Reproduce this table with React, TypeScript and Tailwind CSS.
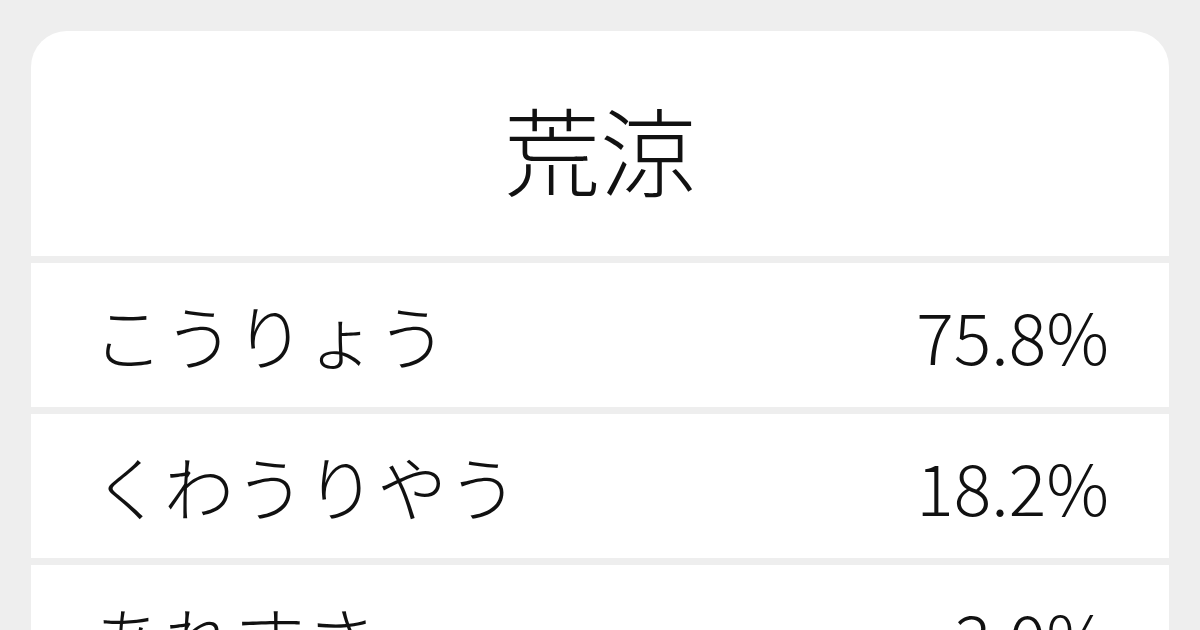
import React from 'react';

const rows = [
  { kana: 'こうりょう', pct: '75.8%' },
  { kana: 'くわうりやう', pct: '18.2%' },
  { kana: 'あれすさ', pct: '3.0%' },
];

export default function App() {
  return (
    <div
      className="w-[1200px] h-[630px] overflow-hidden bg-[#eeeeee] px-[31px] pt-[31px] text-[#111111]"
      style={{ fontFamily: '"Noto Sans CJK JP", "Noto Sans", sans-serif' }}
    >
      <div className="flex flex-col gap-[7px] rounded-t-[36px] overflow-hidden">
        <div className="h-[225px] bg-white flex items-center justify-center pt-[8px]">
          <h1 className="text-[96px] font-light leading-none">荒涼</h1>
        </div>
        {rows.map((r) => (
          <div key={r.kana} className="h-[144px] shrink-0 bg-white flex items-center justify-between pl-[62px] pr-[60px]">
            <span className="text-[70px] font-light leading-none tracking-[1px]">{r.kana}</span>
            <span className="text-[70px] font-light leading-none">{r.pct}</span>
          </div>
        ))}
      </div>
    </div>
  );
}
